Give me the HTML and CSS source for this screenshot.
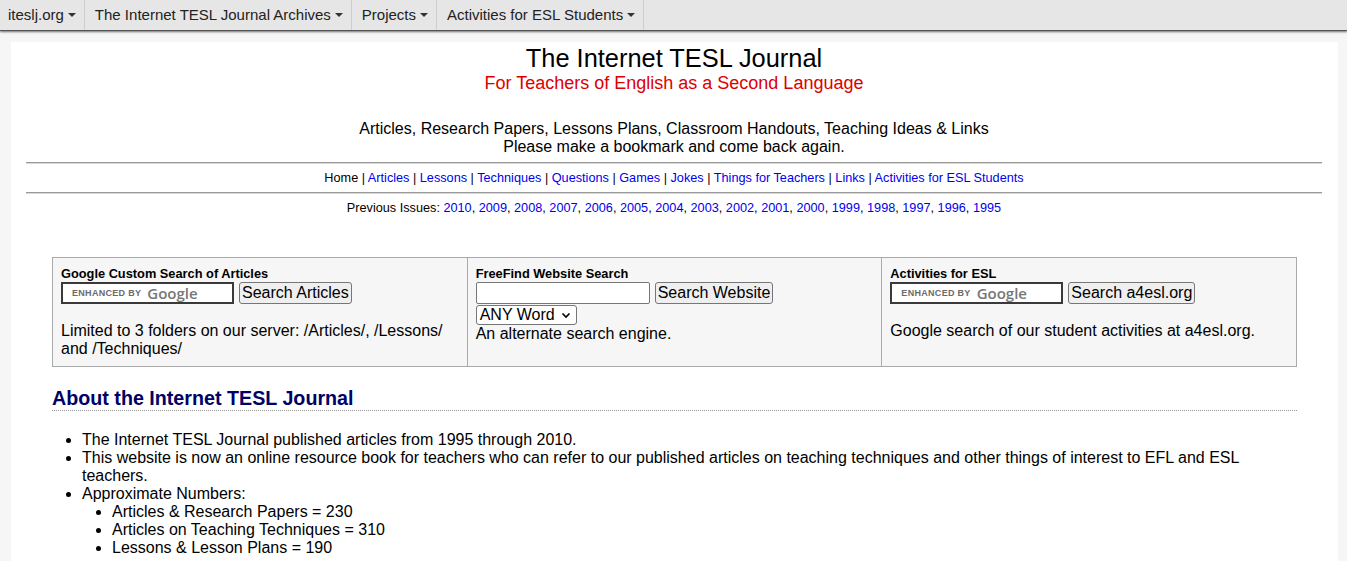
FILE: index.html
```html
<!DOCTYPE html>
<html lang="en">
<head>
<meta charset="utf-8">
<title>The Internet TESL Journal</title>
<link rel="stylesheet" href="styles.css">
</head>
<body>
<nav class="topnav">
  <div class="navitem first">iteslj.org<span class="caret"></span></div>
  <div class="navitem">The Internet TESL Journal Archives<span class="caret"></span></div>
  <div class="navitem">Projects<span class="caret"></span></div>
  <div class="navitem">Activities for ESL Students<span class="caret"></span></div>
</nav>
<div class="page">
  <header class="masthead">
    <div class="title">The Internet TESL Journal</div>
    <div class="subtitle">For Teachers of English as a Second Language</div>
    <p class="tagline">Articles, Research Papers, Lessons Plans, Classroom Handouts, Teaching Ideas &amp; Links<br>Please make a bookmark and come back again.</p>
  </header>
  <hr class="rule">
  <div class="links">Home | <a href="#">Articles</a> | <a href="#">Lessons</a> | <a href="#">Techniques</a> | <a href="#">Questions</a> | <a href="#">Games</a> | <a href="#">Jokes</a> | <a href="#">Things for Teachers</a> | <a href="#">Links</a> | <a href="#">Activities for ESL Students</a></div>
  <hr class="rule second">
  <div class="issues">Previous Issues: <a href="#">2010</a>, <a href="#">2009</a>, <a href="#">2008</a>, <a href="#">2007</a>, <a href="#">2006</a>, <a href="#">2005</a>, <a href="#">2004</a>, <a href="#">2003</a>, <a href="#">2002</a>, <a href="#">2001</a>, <a href="#">2000</a>, <a href="#">1999</a>, <a href="#">1998</a>, <a href="#">1997</a>, <a href="#">1996</a>, <a href="#">1995</a></div>

  <div class="main">
    <div class="searchgrid">
      <div class="cell">
        <div class="cellhead">Google Custom Search of Articles</div>
        <div class="row">
          <div class="gbox"><span class="enh">ENHANCED BY</span><span class="gword">Google</span></div>
          <button class="btn" type="button">Search Articles</button>
        </div>
        <p class="note">Limited to 3 folders on our server: /Articles/, /Lessons/ and /Techniques/</p>
      </div>
      <div class="cell">
        <div class="cellhead">FreeFind Website Search</div>
        <div class="row">
          <input class="plain" type="text">
          <button class="btn" type="button">Search Website</button>
        </div>
        <div class="selrow">
          <div class="sel">ANY Word<svg class="chev" width="10" height="7" viewBox="0 0 10 7"><path d="M1.5 1.5 L5 5 L8.5 1.5" fill="none" stroke="#000" stroke-width="1.6"/></svg></div>
        </div>
        <div class="alt">An alternate search engine.</div>
      </div>
      <div class="cell">
        <div class="cellhead">Activities for ESL</div>
        <div class="row">
          <div class="gbox"><span class="enh">ENHANCED BY</span><span class="gword">Google</span></div>
          <button class="btn" type="button">Search a4esl.org</button>
        </div>
        <p class="note">Google search of our student activities at a4esl.org.</p>
      </div>
    </div>

    <h2 class="about">About the Internet TESL Journal</h2>
    <ul class="facts">
      <li>The Internet TESL Journal published articles from 1995 through 2010.</li>
      <li>This website is now an online resource book for teachers who can refer to our published articles on teaching techniques and other things of interest to EFL and ESL teachers.</li>
      <li>Approximate Numbers:
        <ul class="sub">
          <li>Articles &amp; Research Papers = 230</li>
          <li>Articles on Teaching Techniques = 310</li>
          <li>Lessons &amp; Lesson Plans = 190</li>
        </ul>
      </li>
    </ul>
  </div>
</div>
</body>
</html>
```
FILE: styles.css
```css
html, body {
  margin: 0;
  padding: 0;
}
body {
  background: #f6f6f6;
  font-family: "Liberation Sans", Arial, sans-serif;
  color: #000;
  font-size: 16px;
}
a {
  color: #0000ee;
  text-decoration: none;
}

/* top navigation */
.topnav {
  display: flex;
  height: 30px;
  background: #e6e6e6;
  box-shadow: 0 1px 0 #555, 0 2px 2px rgba(0,0,0,0.55);
  position: relative;
  z-index: 2;
}
.navitem {
  display: flex;
  align-items: center;
  font-size: 15px;
  line-height: 17px;
  color: #222;
  padding: 0 8px 2px 10px;
  border-right: 1px solid #cdcdcd;
}
.navitem.first {
  padding-left: 8px;
}
.caret {
  display: inline-block;
  width: 0;
  height: 0;
  margin-left: 4px;
  margin-top: 2px;
  border-top: 4px solid #333;
  border-left: 4px solid transparent;
  border-right: 4px solid transparent;
}

/* page */
.page {
  background: #fff;
  margin: 12px 9px 0 11px;
  padding: 1px 16px 40px 15px;
  min-height: 560px;
}
.masthead {
  text-align: center;
}
.title {
  font-size: 25.4px;
  line-height: 30px;
}
.subtitle {
  font-size: 18px;
  line-height: 21px;
  color: #dd0000;
}
.tagline {
  margin: 26px 0 0;
  font-size: 16px;
  line-height: 18px;
}
.rule {
  margin: 6px 0 0;
  border: 0;
  border-top: 1px solid #9a9a9a;
  border-bottom: 1px solid #d8d8d8;
  height: 0;
}
.rule.second {
  margin-top: 6px;
}
.links, .issues {
  text-align: center;
  font-size: 12.7px;
  line-height: 15px;
  margin-top: 7px;
}
.issues {
  margin-top: 7px;
}

.main {
  margin: 0 25px 0 26px;
}
.searchgrid {
  margin-top: 41px;
  display: grid;
  grid-template-columns: 1fr 1fr 1fr;
  gap: 1px;
  background: #aaaaaa;
  border: 1px solid #aaaaaa;
}
.cell {
  background: #f6f6f6;
  padding: 8px 8px 8px 8px;
}
.cellhead {
  font-size: 12.8px;
  line-height: 15px;
  font-weight: bold;
}
.row {
  display: flex;
  align-items: center;
  gap: 5px;
  margin-top: 1px;
  height: 22px;
}
.gbox {
  box-sizing: border-box;
  width: 173px;
  height: 22px;
  background: #fff;
  border: 2px solid #3a3a3a;
  display: flex;
  align-items: center;
  padding-left: 9px;
  color: #757575;
}
.enh {
  font-size: 9px;
  font-weight: bold;
  letter-spacing: 0.3px;
  margin-right: 6px;
  color: #6a6a6a;
}
.gword {
  font-size: 15px;
  font-family: "Open Sans", "Liberation Sans", sans-serif;
  color: #777;
  font-weight: 600;
  line-height: 1;
}
.plain {
  box-sizing: border-box;
  width: 174px;
  height: 22px;
  margin: 0;
  border: 1px solid #767676;
  border-radius: 2px;
  background: #fff;
  font-size: 16px;
}
.btn {
  box-sizing: border-box;
  height: 22px;
  margin: 0;
  padding: 0 2px;
  font-family: "Liberation Sans", Arial, sans-serif;
  font-size: 16px;
  line-height: 18px;
  color: #000;
  background: #efefef;
  border: 1px solid #767676;
  border-radius: 3px;
}
.selrow {
  margin-top: 1px;
  display: flex;
}
.sel {
  box-sizing: border-box;
  width: 101px;
  height: 20px;
  border: 1px solid #767676;
  border-radius: 3px;
  background: #fff;
  display: flex;
  align-items: center;
  justify-content: space-between;
  padding: 0 5px 0 3px;
  font-size: 16px;
  line-height: 18px;
}
.chev {
  display: block;
}
.alt {
  font-size: 16px;
  line-height: 18px;
}
.note {
  margin: 18px 0 0;
  font-size: 16px;
  line-height: 18px;
}

.about {
  margin: 20px 0 0;
  font-size: 19.7px;
  line-height: 23px;
  font-weight: bold;
  color: #000066;
  border-bottom: 1px dotted #999;
}
.facts {
  margin: 20px 0 0;
  padding-left: 30px;
  font-size: 16px;
  line-height: 18px;
  list-style-type: disc;
}
.facts .sub {
  margin: 0;
  padding-left: 30px;
  list-style-type: disc;
}
```
